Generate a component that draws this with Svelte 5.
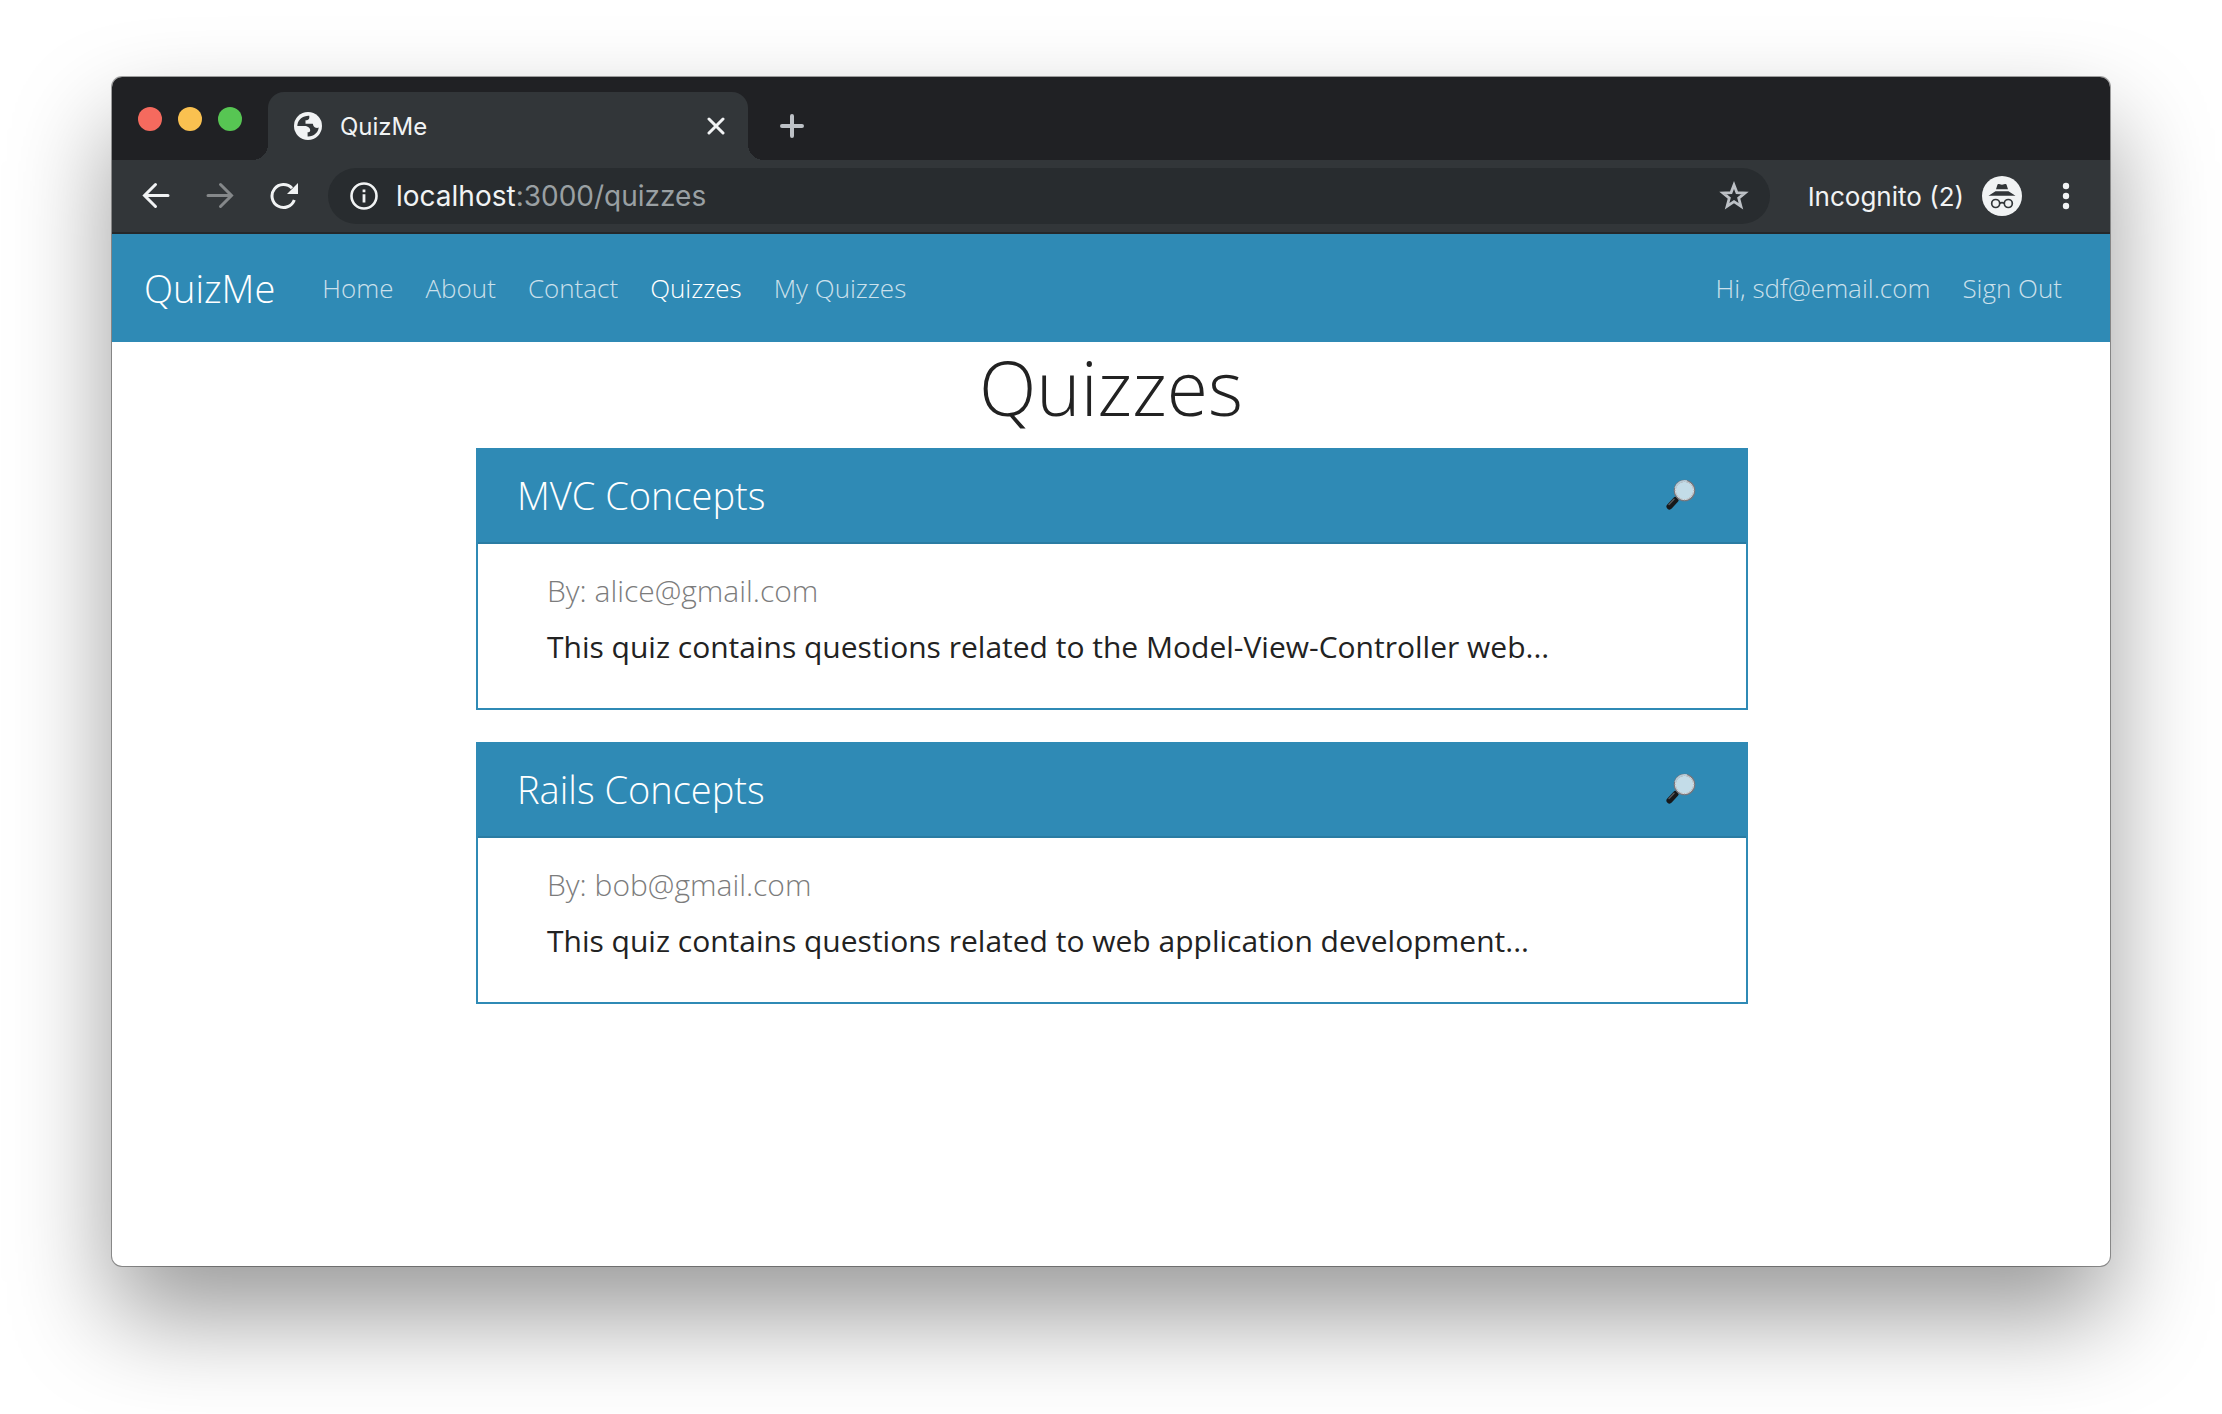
<script>
  const links = ['Home', 'About', 'Contact', 'Quizzes', 'My Quizzes'];
  const current = 'Quizzes';
  const quizzes = [
    {
      title: 'MVC Concepts',
      author: 'alice@gmail.com',
      text: 'This quiz contains questions related to the Model-View-Controller web...'
    },
    {
      title: 'Rails Concepts',
      author: 'bob@gmail.com',
      text: 'This quiz contains questions related to web application development...'
    }
  ];
</script>

<div class="desktop">
  <div class="window">
    <div class="tabstrip">
      <div class="lights">
        <button class="light red" aria-label="Close window"></button>
        <button class="light yellow" aria-label="Minimize window"></button>
        <button class="light green" aria-label="Zoom window"></button>
      </div>
      <div class="tab">
        <svg class="globe" viewBox="0 0 28 28" aria-hidden="true">
          <circle cx="14" cy="14" r="14" fill="#f1f3f4" />
          <path d="M11.5 4.2C6.600 5.300 3.600 9 3.300 14H10.500C13.500 14 16.200 15.500 16.200 18.500C16.200 19.800 15 20.300 13.600 20.300V24.500C19.500 24.800 24.300 20.500 24.700 15.500C23 16.500 20.500 15.600 19.500 14L18.800 11.800H11.500V8.300C13.500 8.300 15 7.500 15.300 6V3.800C14 3.600 12.700 3.800 11.500 4.200Z" fill="#323639" />
        </svg>
        <span class="tab-title">QuizMe</span>
        <button class="close" aria-label="Close tab">
          <svg width="18" height="18" viewBox="0 0 18 18"><path d="M2 2L16 16M16 2L2 16" stroke="#f1f3f4" stroke-width="3" stroke-linecap="round" /></svg>
        </button>
      </div>
      <button class="new-tab" aria-label="New tab">
        <svg width="24" height="24" viewBox="0 0 24 24"><path d="M12 2V22M2 12H22" stroke="#bdc1c6" stroke-width="4" stroke-linecap="round" /></svg>
      </button>
    </div>

    <div class="toolbar">
      <div class="history">
        <button aria-label="Back">
          <svg width="28" height="28" viewBox="0 0 28 28" fill="none" stroke="#f1f3f4" stroke-width="3" stroke-linecap="round"><path d="M26 13.500H3M13.500 2.500L2.500 13.500L13.500 24.500" /></svg>
        </button>
        <button aria-label="Forward" disabled>
          <svg width="28" height="28" viewBox="0 0 28 28" fill="none" stroke="#85888a" stroke-width="3" stroke-linecap="round"><path d="M2 13.500H25M14.500 2.500L25.500 13.500L14.500 24.500" /></svg>
        </button>
        <button aria-label="Reload">
          <svg width="28" height="28" viewBox="0 0 28 28"><path d="M24.300 18A11.500 11.500 0 1 1 22 6.200" fill="none" stroke="#f1f3f4" stroke-width="3" /><path d="M28 1V12H17Z" fill="#f1f3f4" /></svg>
        </button>
      </div>
      <div class="omnibox">
        <svg width="28" height="28" viewBox="0 0 28 28" aria-hidden="true"><circle cx="14" cy="14" r="12.500" fill="none" stroke="#f1f3f4" stroke-width="2.600" /><path d="M12.600 7.500H15.400V10.200H12.600ZM12.600 12.300H15.400V20.500H12.600Z" fill="#f1f3f4" /></svg>
        <span class="url">localhost<span class="path">:3000/quizzes</span></span>
        <button aria-label="Bookmark this page">
          <svg width="30" height="30" viewBox="0 0 30 30"><path d="M15 4L17.900 11.600L26 12L19.700 17.100L21.900 25.200L15 20.700L8.100 25.200L10.300 17.100L4 12L12.100 11.600Z" fill="none" stroke="#bdc1c6" stroke-width="2.800" /></svg>
        </button>
      </div>
      <span class="incognito">Incognito (2)</span>
      <svg class="spy" viewBox="0 0 40 40" aria-hidden="true">
        <circle cx="20" cy="20" r="20" fill="#f1f3f4" />
        <path d="M15.500 8.500Q16 7.600 17 8L20 8.800L23 8Q24 7.600 24.500 8.500L26 13.300H14ZM13.500 15.200H26.500L33.500 19.700H6.500Z" fill="#323639" />
        <g fill="none" stroke="#323639" stroke-width="1.700"><circle cx="13.700" cy="27.500" r="4" /><circle cx="26.300" cy="27.500" r="4" /><path d="M17.700 27.300Q20 25.800 22.300 27.300" /></g>
      </svg>
      <button class="menu" aria-label="Menu">
        <svg width="8" height="28" viewBox="0 0 8 28" fill="#f1f3f4"><circle cx="4" cy="4" r="3.200" /><circle cx="4" cy="14" r="3.200" /><circle cx="4" cy="24" r="3.200" /></svg>
      </button>
    </div>

    <div class="page">
      <nav class="navbar">
        <a class="brand" href="#home">QuizMe</a>
        {#each links as link}
          <a class="link" class:active={link === current} href="#{link.toLowerCase().replace(' ', '-')}">{link}</a>
        {/each}
        <a class="link account" href="#account">Hi, sdf@email.com</a>
        <a class="link" href="#sign-out">Sign Out</a>
      </nav>

      <main>
        <h1>Quizzes</h1>
        <div class="cards">
          {#each quizzes as quiz}
            <article class="card">
              <header>
                <h2>{quiz.title}</h2>
                <a class="view" href="#quiz" aria-label="View {quiz.title}">
                  <svg width="32" height="32" viewBox="0 0 32 32">
                    <path d="M11.500 20.500L14.500 17.500" stroke="#b9bcc0" stroke-width="3" />
                    <path d="M4.500 27.500L10.500 21" stroke="#17181a" stroke-width="6" stroke-linecap="round" />
                    <path d="M4 25.500L9 20.300" stroke="#55595c" stroke-width="1.500" stroke-linecap="round" />
                    <circle cx="19.500" cy="11.500" r="9.800" fill="#c3dce8" stroke="#77777d" stroke-width="2" />
                    <circle cx="19.500" cy="11.500" r="9.200" fill="none" stroke="#d5d8db" stroke-width="1" />
                    <path d="M10.200 9A9.800 9.800 0 0 1 22 2" fill="none" stroke="#b4cbd8" stroke-width="1.500" />
                  </svg>
                </a>
              </header>
              <div class="body">
                <p class="author">By: {quiz.author}</p>
                <p class="text">{quiz.text}</p>
              </div>
            </article>
          {/each}
        </div>
      </main>
    </div>
  </div>
</div>

<style>
  :global(body) {
    background: #fff;
  }
  .desktop {
    box-sizing: border-box;
    min-height: 100vh;
    display: flex;
    padding: 77px 112px 148px;
    overflow: hidden;
  }
  .window {
    flex: 1;
    min-width: 0;
    display: flex;
    flex-direction: column;
    border-radius: 10px;
    background: #fff;
    overflow: hidden;
    box-shadow:
      0 0 0 1px rgba(0, 0, 0, 0.35),
      0 50px 100px rgba(0, 0, 0, 0.4);
  }
  button {
    display: flex;
    align-items: center;
    justify-content: center;
    padding: 0;
    border: 0;
    background: none;
  }
  svg {
    display: block;
    flex: none;
  }
  .tabstrip {
    display: flex;
    height: 83px;
    background: #202124;
    color: #f1f3f4;
    font-family: Inter, Roboto, sans-serif;
  }
  .lights {
    display: flex;
    gap: 16px;
    padding: 30px 26px 0;
  }
  .light {
    width: 24px;
    height: 24px;
    border-radius: 50%;
  }
  .red {
    background: #f56a5e;
  }
  .yellow {
    background: #fac150;
  }
  .green {
    background: #57c653;
  }
  .tab {
    position: relative;
    box-sizing: border-box;
    display: flex;
    align-items: center;
    width: 480px;
    margin-top: 15px;
    padding: 0 20px 0 26px;
    border-radius: 16px 16px 0 0;
    background: #323639;
  }
  .tab::before,
  .tab::after {
    content: '';
    position: absolute;
    bottom: 0;
    width: 16px;
    height: 16px;
  }
  .tab::before {
    right: 100%;
    background: radial-gradient(circle at 0 0, transparent 16px, #323639 16px);
  }
  .tab::after {
    left: 100%;
    background: radial-gradient(circle at 100% 0, transparent 16px, #323639 16px);
  }
  .globe {
    width: 28px;
    height: 28px;
  }
  .tab-title {
    flex: 1;
    padding-left: 18px;
    font-size: 24px;
  }
  .close {
    width: 24px;
    height: 24px;
  }
  .new-tab {
    width: 88px;
    padding-top: 15px;
  }
  .toolbar {
    display: flex;
    align-items: center;
    height: 72px;
    padding: 0 40px 0 30px;
    border-bottom: 2px solid #25282a;
    background: #323639;
    color: #f1f3f4;
    font-family: Inter, Roboto, sans-serif;
  }
  .history {
    display: flex;
    gap: 36px;
    padding-right: 30px;
  }
  .omnibox {
    flex: 1;
    display: flex;
    align-items: center;
    height: 56px;
    padding: 0 21px 0 22px;
    border-radius: 28px;
    background: #282c2f;
  }
  .url {
    flex: 1;
    padding-left: 18px;
    font-size: 28px;
  }
  .path {
    color: #9aa0a3;
  }
  .incognito {
    padding: 0 18px 0 38px;
    font-size: 26px;
  }
  .spy {
    width: 40px;
    height: 40px;
  }
  .menu {
    width: 8px;
    margin-left: 40px;
  }
  .page {
    flex: 1;
    color: #222;
    font-family: 'Open Sans', 'Noto Sans', sans-serif;
  }
  .navbar {
    display: flex;
    align-items: center;
    gap: 32px;
    height: 108px;
    padding: 0 48px 0 32px;
    background: #2f8ab5;
    white-space: nowrap;
  }
  .navbar a {
    text-decoration: none;
    font-weight: 300;
  }
  .brand {
    padding-right: 15px;
    color: #fff;
    font-size: 38px;
  }
  .link {
    color: rgba(255, 255, 255, 0.75);
    font-size: 26px;
  }
  .navbar .active {
    color: #fff;
  }
  .account {
    margin-left: auto;
  }
  h1 {
    margin: 0;
    padding-bottom: 16px;
    text-align: center;
    font-size: 75px;
    font-weight: 300;
    line-height: 90px;
  }
  .cards {
    display: grid;
    gap: 32px;
    padding: 0 362px 0 364px;
  }
  .card {
    border: 2px solid #2f8ab5;
  }
  header {
    display: flex;
    align-items: center;
    justify-content: space-between;
    height: 90px;
    padding: 0 49px 2px 39px;
    border-bottom: 2px solid #2a7ca3;
    background: #2f8ab5;
  }
  h2 {
    margin: 0;
    color: #fff;
    font-size: 38px;
    font-weight: 300;
  }
  .body {
    padding: 19px 69px 33px;
    font-size: 30px;
  }
  p {
    margin: 0;
    line-height: 56px;
  }
  .author {
    color: #7c7c7c;
    font-weight: 300;
  }
</style>
